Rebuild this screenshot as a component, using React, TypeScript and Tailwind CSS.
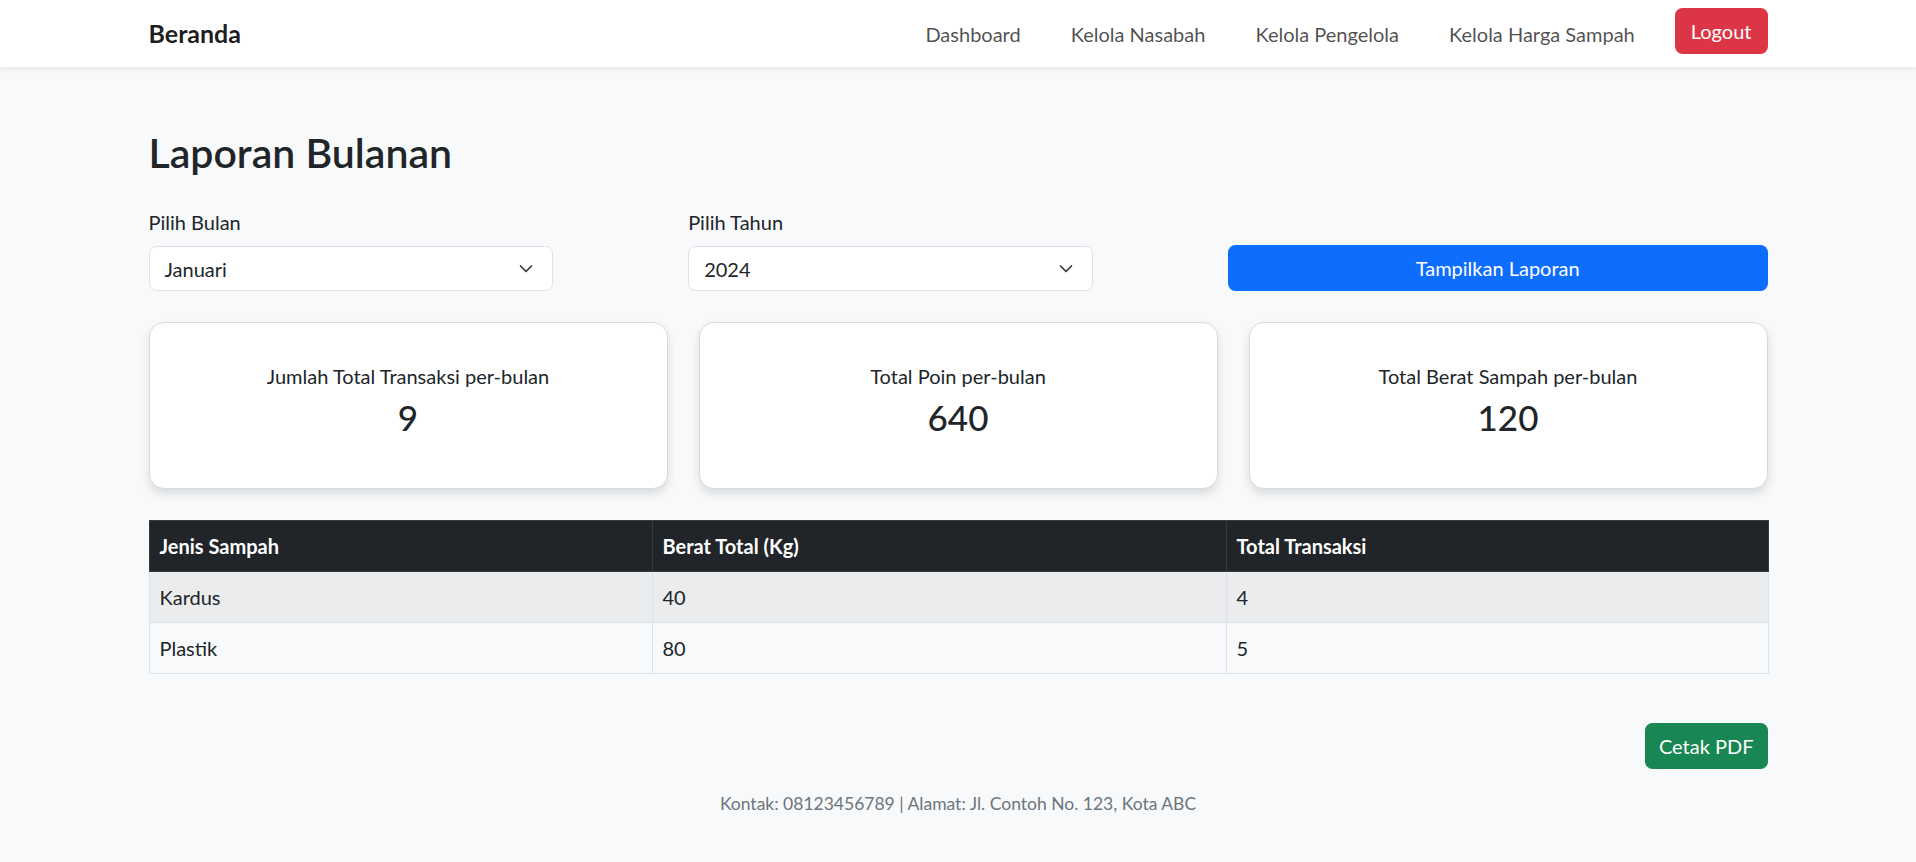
import React from "react";

function Chevron() {
  return (
    <svg width="14" height="9" viewBox="0 0 14 9" fill="none" className="absolute right-[19px] top-1/2 -translate-y-1/2">
      <path d="M1.5 1.5l5.5 5.5 5.5-5.5" stroke="#343a40" strokeWidth="1.7" strokeLinecap="round" strokeLinejoin="round" />
    </svg>
  );
}

function SelectBox({ value }: { value: string }) {
  return (
    <div className="relative w-3/4 h-[45px] bg-white border border-[#dee2e6] rounded-[7.5px] flex items-center pl-[15px] text-[20px] text-[#212529]">
      {value}
      <Chevron />
    </div>
  );
}

function Card({ title, value }: { title: string; value: string }) {
  return (
    <div className="h-[167px] bg-white border border-[#d9dcdf] rounded-[15px] shadow-[0_5px_10px_rgba(0,0,0,0.12)] flex flex-col items-center pt-[38px]">
      <div className="text-[20px] leading-[30px] mb-[5px] text-[#212529]">{title}</div>
      <div className="text-[35px] leading-[42px] font-medium text-[#212529]">{value}</div>
    </div>
  );
}

export default function App() {
  const rows = [
    { jenis: "Kardus", berat: "40", total: "4" },
    { jenis: "Plastik", berat: "80", total: "5" },
  ];
  return (
    <div className="min-h-screen bg-[#f8f9fa] font-['Lato','Liberation_Sans',sans-serif] text-[#212529]">
      <nav className="bg-white h-[67px] shadow-[0_2px_5px_rgba(0,0,0,0.08)] relative z-10">
        <div className="w-[1619px] mx-auto h-full flex items-center justify-between">
          <span className="text-[25px] font-bold text-black/90">Beranda</span>
          <div className="flex items-center text-[20px] text-black/70">
            <span>Dashboard</span>
            <span className="ml-[50px]">Kelola Nasabah</span>
            <span className="ml-[50px]">Kelola Pengelola</span>
            <span className="ml-[50px]">Kelola Harga Sampah</span>
            <button className="ml-[40px] mb-[5px] h-[46px] px-[16px] bg-[#dc3545] text-white text-[20px] rounded-[7.5px]">
              Logout
            </button>
          </div>
        </div>
      </nav>

      <main className="w-[1619px] mx-auto pt-[62px]">
        <h2 className="text-[41px] leading-[48px] font-semibold mb-[30px]">Laporan Bulanan</h2>

        <div className="grid grid-cols-3 items-end mb-[31px]">
          <div>
            <label className="block text-[20px] leading-[30px] mb-[9px]">Pilih Bulan</label>
            <SelectBox value="Januari" />
          </div>
          <div>
            <label className="block text-[20px] leading-[30px] mb-[9px]">Pilih Tahun</label>
            <SelectBox value="2024" />
          </div>
          <button className="h-[46px] w-full bg-[#0d6efd] text-white text-[20px] rounded-[7.5px]">
            Tampilkan Laporan
          </button>
        </div>

        <div className="grid grid-cols-3 gap-[31px] mb-[31px]">
          <Card title="Jumlah Total Transaksi per-bulan" value="9" />
          <Card title="Total Poin per-bulan" value="640" />
          <Card title="Total Berat Sampah per-bulan" value="120" />
        </div>

        <table className="w-full table-fixed border-collapse text-[20px]">
          <colgroup>
            <col className="w-[503px]" />
            <col className="w-[574px]" />
            <col className="w-[542px]" />
          </colgroup>
          <thead>
            <tr className="bg-[#212529] text-white">
              <th className="text-left font-bold px-[10px] py-[10px] leading-[30px] border border-[#373b3e]">Jenis Sampah</th>
              <th className="text-left font-bold px-[10px] py-[10px] leading-[30px] border border-[#373b3e]">Berat Total (Kg)</th>
              <th className="text-left font-bold px-[10px] py-[10px] leading-[30px] border border-[#373b3e]">Total Transaksi</th>
            </tr>
          </thead>
          <tbody>
            {rows.map((r, i) => (
              <tr key={r.jenis} className={i % 2 === 0 ? "bg-[#ebeced]" : "bg-[#f8f9fa]"}>
                <td className="px-[10px] py-[10px] leading-[30px] border border-[#dee2e6]">{r.jenis}</td>
                <td className="px-[10px] py-[10px] leading-[30px] border border-[#dee2e6]">{r.berat}</td>
                <td className="px-[10px] py-[10px] leading-[30px] border border-[#dee2e6]">{r.total}</td>
              </tr>
            ))}
          </tbody>
        </table>

        <div className="flex justify-end mt-[49px]">
          <button className="h-[46px] px-[14px] bg-[#198754] text-white text-[20px] rounded-[7.5px]">Cetak PDF</button>
        </div>

        <footer className="text-center text-[17.5px] leading-[30px] text-[#6c757d] mt-[20px] pb-[20px]">
          Kontak: 08123456789 | Alamat: Jl. Contoh No. 123, Kota ABC
        </footer>
      </main>
    </div>
  );
}
